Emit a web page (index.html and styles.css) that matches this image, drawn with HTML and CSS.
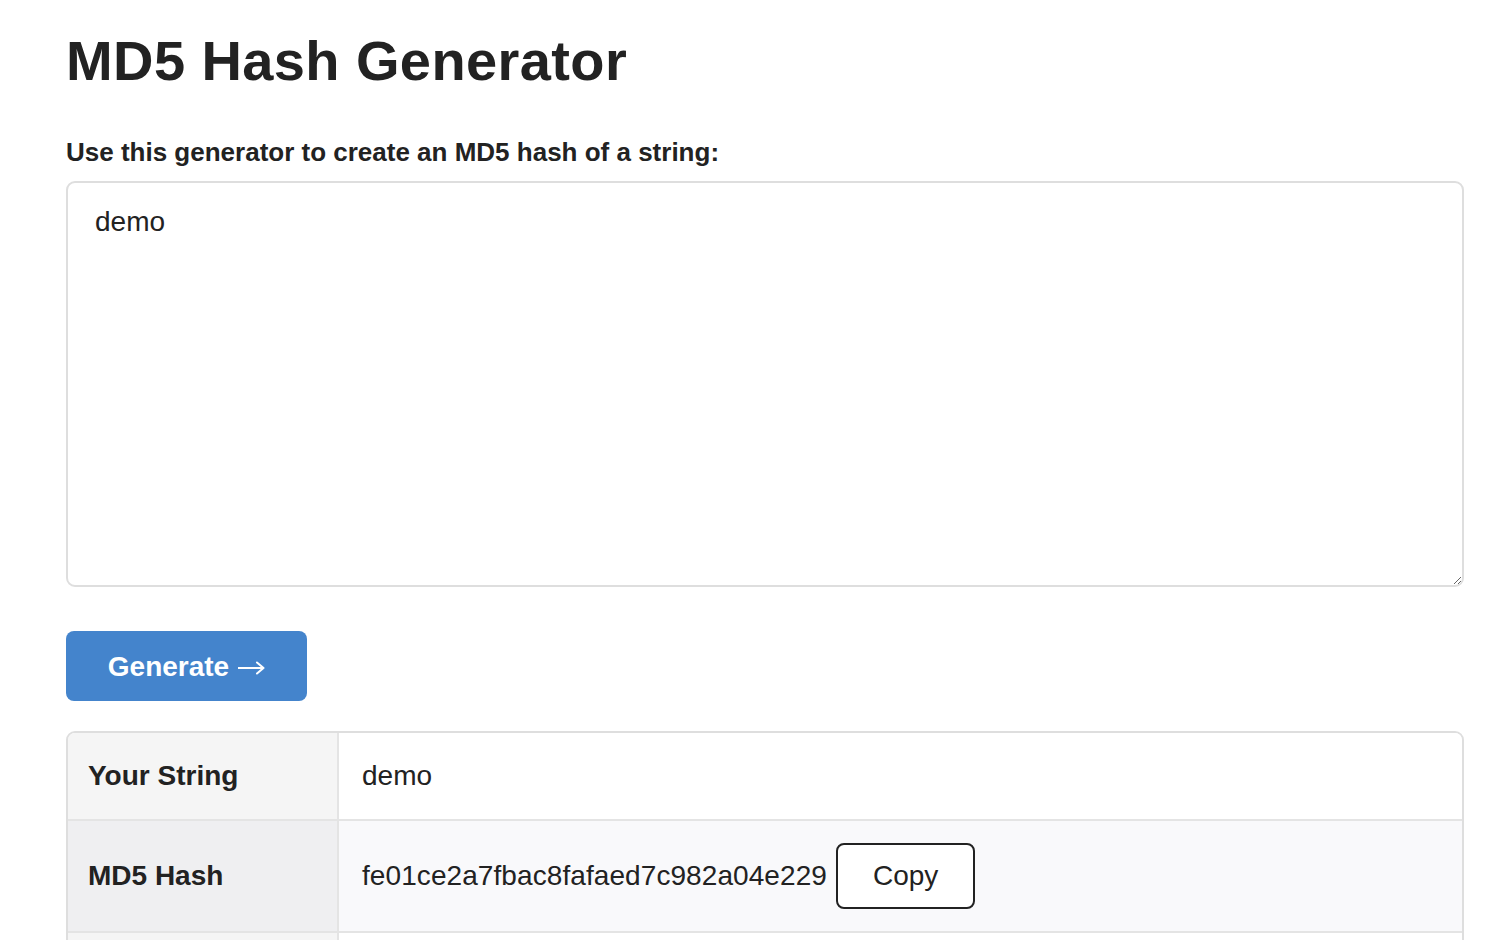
FILE: index.html
```html
<!DOCTYPE html>
<html lang="en">
<head>
<meta charset="utf-8">
<title>MD5 Hash Generator</title>
<link rel="stylesheet" href="styles.css">
</head>
<body>
<main class="page">
  <h1 class="title">MD5 Hash Generator</h1>
  <form class="gen-form">
    <label class="label" for="input">Use this generator to create an MD5 hash of a string:</label>
    <textarea id="input" class="input">demo</textarea>
    <button type="button" class="btn-generate"><span>Generate</span><svg class="arrow" width="27" height="14" viewBox="0 0 27 14" aria-hidden="true"><path d="M0.5 7H25.5M19 1.5L25.5 7L19 12.5" fill="none" stroke="#ffffff" stroke-width="2" stroke-linecap="round" stroke-linejoin="round"/></svg></button>
  </form>
  <table class="result">
    <tbody>
      <tr>
        <th>Your String</th>
        <td>demo</td>
      </tr>
      <tr>
        <th>MD5 Hash</th>
        <td><div class="hash-cell"><span class="hash">fe01ce2a7fbac8fafaed7c982a04e229</span><button type="button" class="btn-copy">Copy</button></div></td>
      </tr>
      <tr>
        <th>SHA1 Hash</th>
        <td>89e495e7941cf9e40e6980d14a16bf023ccd4c91</td>
      </tr>
    </tbody>
  </table>
</main>
</body>
</html>
```

FILE: styles.css
```css
* { box-sizing: border-box; }

html, body {
  margin: 0;
  padding: 0;
  background: #ffffff;
}

body {
  font-family: "Liberation Sans", Arial, Helvetica, sans-serif;
  font-size: 28px;
  line-height: 1.2;
  color: #222222;
}

.page {
  width: 1398px;
  margin-left: 66px;
  padding-top: 27px;
}

.title {
  margin: 0;
  font-size: 56px;
  font-weight: 700;
  line-height: 1.2;
  letter-spacing: 0.4px;
  color: #222222;
}

.gen-form {
  display: flex;
  flex-direction: column;
  align-items: flex-start;
  margin-top: 43px;
}

.label {
  display: block;
  font-size: 26px;
  font-weight: 700;
  line-height: 1.2;
  color: #222222;
}

.input {
  display: block;
  width: 100%;
  height: 406px;
  margin-top: 13px;
  padding: 22px 27px;
  border: 2px solid #dedede;
  border-radius: 9px;
  font-family: "Liberation Sans", Arial, Helvetica, sans-serif;
  font-size: 28px;
  line-height: 1.2;
  color: #222222;
  background: #ffffff;
  resize: vertical;
  outline: none;
}

.btn-generate {
  display: flex;
  align-items: center;
  justify-content: center;
  gap: 9px;
  margin-top: 44px;
  height: 70px;
  width: 241px;
  padding: 0;
  border: none;
  border-radius: 8px;
  background: #4484cc;
  color: #ffffff;
  font-family: "Liberation Sans", Arial, Helvetica, sans-serif;
  font-size: 28px;
  font-weight: 700;
  line-height: 1.2;
  cursor: pointer;
}

.arrow {
  display: block;
  margin-top: 3px;
}

.result {
  width: 100%;
  margin-top: 30px;
  border-collapse: separate;
  border-spacing: 0;
  border: 2px solid #dedede;
  border-radius: 9px;
  overflow: hidden;
}

.result th,
.result td {
  padding: 26px 22px;
  text-align: left;
  vertical-align: middle;
  font-size: 28px;
  line-height: 1.2;
  border-top: 2px solid #e4e4e4;
}

.result tr:first-child th,
.result tr:first-child td {
  border-top: none;
}

.result th {
  width: 271px;
  padding-left: 20px;
  font-weight: 700;
  background: #f5f5f5;
  border-right: 2px solid #e4e4e4;
}

.result td {
  font-weight: 400;
  background: #ffffff;
  padding-left: 23px;
}

.result tr:nth-child(2) th {
  background: #efeff1;
}

.result tr:nth-child(2) td {
  background: #f9f9fb;
  padding-top: 22px;
  padding-bottom: 22px;
}

.hash-cell {
  display: flex;
  align-items: center;
  gap: 9px;
}

.hash {
  letter-spacing: 0.08px;
}

.btn-copy {
  height: 66px;
  padding: 0 35px;
  border: 2px solid #222222;
  border-radius: 8px;
  background: #ffffff;
  color: #222222;
  font-family: "Liberation Sans", Arial, Helvetica, sans-serif;
  font-size: 28px;
  line-height: 1.2;
  cursor: pointer;
}
```
